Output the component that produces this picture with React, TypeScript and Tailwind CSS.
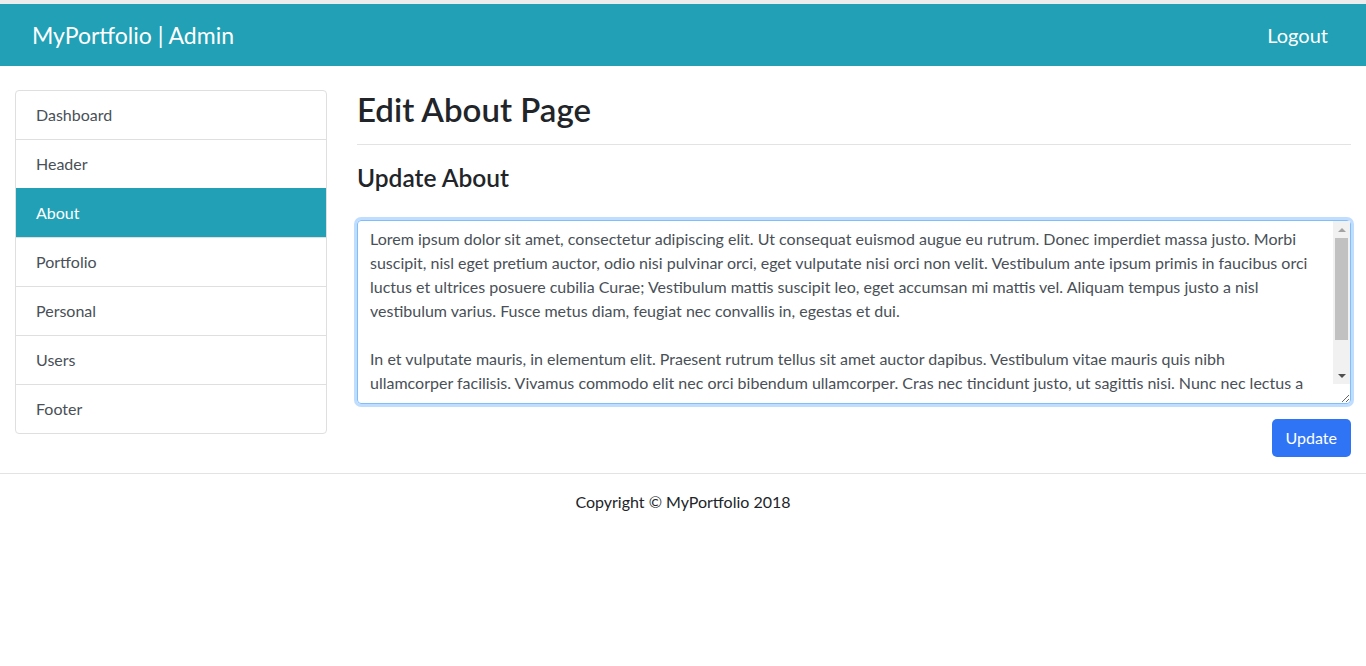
const navItems = ["Dashboard", "Header", "About", "Portfolio", "Personal", "Users", "Footer"];

const aboutText = `Lorem ipsum dolor sit amet, consectetur adipiscing elit. Ut consequat euismod augue eu rutrum. Donec imperdiet massa justo. Morbi
suscipit, nisl eget pretium auctor, odio nisi pulvinar orci, eget vulputate nisi orci non velit. Vestibulum ante ipsum primis in faucibus orci
luctus et ultrices posuere cubilia Curae; Vestibulum mattis suscipit leo, eget accumsan mi mattis vel. Aliquam tempus justo a nisl
vestibulum varius. Fusce metus diam, feugiat nec convallis in, egestas et dui.

In et vulputate mauris, in elementum elit. Praesent rutrum tellus sit amet auctor dapibus. Vestibulum vitae mauris quis nibh
ullamcorper facilisis. Vivamus commodo elit nec orci bibendum ullamcorper. Cras nec tincidunt justo, ut sagittis nisi. Nunc nec lectus a`;

// the screenshot browser hides native scrollbars, so draw one over the textarea
const FakeScrollbar = () => (
  <div className="pointer-events-none absolute top-[1px] right-[1px] flex h-[163px] w-[17px] flex-col bg-[#f1f1f1]">
    <div className="flex h-[17px] items-center justify-center">
      <div className="h-0 w-0 border-x-[4px] border-b-[4px] border-x-transparent border-b-[#a3a3a3]" />
    </div>
    <div className="mx-[2px] h-[102px] bg-[#c1c1c1]" />
    <div className="flex-1" />
    <div className="flex h-[17px] items-center justify-center">
      <div className="h-0 w-0 border-x-[4px] border-t-[4px] border-x-transparent border-t-[#505050]" />
    </div>
  </div>
);

const App = () => {
  return (
    <div className="min-h-screen bg-white font-['Lato','Liberation_Sans',sans-serif] text-[#212529]">
      <div className="h-[4px] bg-[#ececec]" />
      <nav className="flex h-[62px] items-center justify-between bg-[#21a0b6] px-[32px] text-white">
        <span className="text-[23px] leading-none">MyPortfolio | Admin</span>
        <span className="pr-[6px] text-[20px] leading-none">Logout</span>
      </nav>

      <div className="flex gap-[30px] px-[15px] pt-[24px]">
        <ul className="flex h-fit w-[312px] shrink-0 flex-col overflow-hidden rounded-[4px] border border-[#dfdfdf]">
          {navItems.map((item, i) => (
            <li
              key={item}
              className={
                item === "About"
                  ? "flex h-[49px] items-center bg-[#21a0b6] px-[20px] text-[16px] text-white"
                  : `flex items-center px-[20px] text-[16px] text-[#495057] ${i > 0 ? "h-[49px] border-t border-[#dfdfdf]" : "h-[48px]"}`
              }
            >
              {item}
            </li>
          ))}
        </ul>

        <main className="flex flex-1 flex-col">
          <h1 className="h-[38px] text-[33px] font-semibold leading-[38px]">Edit About Page</h1>
          <hr className="mt-[16px] border-[#e3e3e3]" />
          <h3 className="mt-[18px] h-[29px] text-[24.5px] font-semibold leading-[29px]">Update About</h3>
          <div className="relative mt-[28px]">
            <textarea
              wrap="off"
              spellCheck={false}
              defaultValue={aboutText}
              className="block h-[184px] w-full resize-y overflow-hidden whitespace-pre rounded-[4px] border border-[#80bdff] py-[6px] pr-[30px] pl-[12px] text-[16px] leading-[24px] text-[#495057] shadow-[0_0_0_3px_rgba(0,123,255,0.25)] outline-none"
            />
            <FakeScrollbar />
          </div>
          <div className="mt-[15px] flex justify-end">
            <button className="h-[38px] rounded-[5px] bg-[#2f74f5] px-[14px] text-[16px] text-white">Update</button>
          </div>
        </main>
      </div>

      <footer className="mt-[16px] border-t border-[#e3e3e3] pt-[16px] text-center text-[16px] leading-[24px]">
        Copyright © MyPortfolio 2018
      </footer>
    </div>
  );
};

export default App;
